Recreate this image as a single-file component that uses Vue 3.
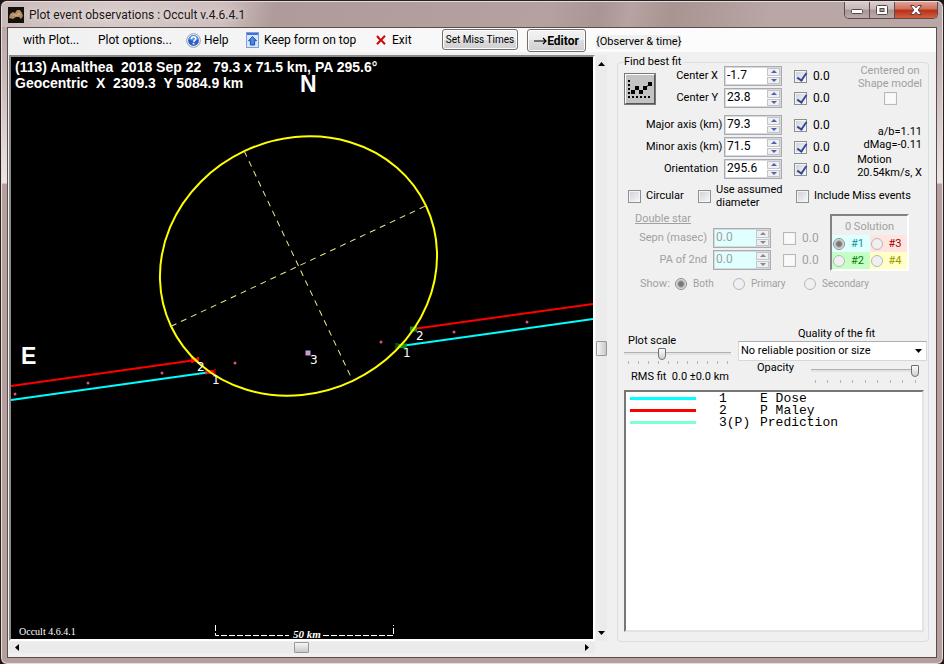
<script setup>
import { reactive, ref } from 'vue'

const ellipseRows = reactive([
  { id: 'cx', label: 'Center X', value: '-1.7', on: true },
  { id: 'cy', label: 'Center Y', value: '23.8', on: true },
  { id: 'major', label: 'Major axis (km)', value: '79.3', on: true, spaced: true },
  { id: 'minor', label: 'Minor axis (km)', value: '71.5', on: true },
  { id: 'orient', label: 'Orientation', value: '295.6', on: true }
])
const doubleRows = reactive([
  { id: 'sepn', label: 'Sepn (masec)', value: '0.0' },
  { id: 'pa', label: 'PA of 2nd', value: '0.0' }
])
const solutions = [
  { id: 1, tone: 'cyan' },
  { id: 3, tone: 'pink' },
  { id: 2, tone: 'green' },
  { id: 4, tone: 'yellow' }
]
const shows = ['Both', 'Primary', 'Secondary']
const quality = ref('No reliable position or size')
const scale = ref(34)
const opacity = ref(100)
const observers = [
  { color: '#00ffff', num: '1', name: 'E Dose' },
  { color: '#ff0000', num: '2', name: 'P Maley' },
  { color: '#7fffd4', num: '3(P)', name: 'Prediction' }
]
const dots = [[15, 394], [88, 383], [162, 373], [235, 363], [381, 342], [454, 332], [527, 322]]

function step(row, delta) {
  row.value = (parseFloat(row.value) + delta).toFixed(1)
}
</script>

<template>
  <div class="window">
    <header class="titlebar">
      <svg class="app-icon" viewBox="0 0 16 16" aria-hidden="true">
        <rect width="16" height="16" fill="#17110d" />
        <path d="M1 11 L2 7 L5 5 L7 6 L9 3 L12 3 L14 6 L15 9 L13 12 L11 10 L8 10 L5 12 Z" fill="#b08a62" />
        <path d="M3 8 L6 7 L8 8 L11 5 L13 8 L8 9 Z" fill="#c8a880" />
      </svg>
      <h1>Plot event observations : Occult v.4.6.4.1</h1>
      <div class="caption">
        <button type="button" class="cap min" aria-label="Minimize">
          <svg viewBox="0 0 14 12"><rect x="1.5" y="5.5" width="11" height="4" rx="1" fill="#fff" stroke="#54474c" /></svg>
        </button>
        <button type="button" class="cap max" aria-label="Maximize">
          <svg viewBox="0 0 14 12"><rect x="1.5" y="1.5" width="11" height="9" rx="1" fill="#fff" stroke="#54474c" /><rect x="5" y="4.500" width="4" height="3" fill="#b5a3a3" stroke="#54474c" /></svg>
        </button>
        <button type="button" class="cap close" aria-label="Close">
          <svg viewBox="0 0 14 12"><path d="M1.500 1.500h3.500l2 2.300 2-2.300h3.500L9.200 6l3.300 4.500H9L7 8.200 5 10.500H1.500L4.800 6z" fill="#fff" stroke="#5a3d42" /></svg>
        </button>
      </div>
    </header>

    <div class="client">
      <nav class="toolbar">
        <div class="menu">
          <button type="button">with Plot...</button>
          <button type="button">Plot options...</button>
          <button type="button">
            <svg class="ic-help" viewBox="0 0 16 16" aria-hidden="true">
              <circle cx="8" cy="8" r="7.300" fill="#f4f6fa" stroke="#8d98ac" />
              <circle cx="8" cy="8" r="5.800" fill="#2c5fc9" />
              <path d="M3 7a5 4.500 0 0 1 10 0q-5 2-10 0z" fill="#5f8fe6" />
              <path d="M5.800 6.300q0-2.300 2.300-2.300t2.300 2q0 1-1.100 1.800T8.100 9.500" fill="none" stroke="#fff" stroke-width="1.600" />
              <rect x="7.200" y="10.500" width="1.800" height="1.700" fill="#fff" />
            </svg>Help
          </button>
          <button type="button">
            <svg class="ic-page" viewBox="0 0 13 16" aria-hidden="true">
              <rect x="0.500" y="0.500" width="12" height="15" fill="#d8e7fb" stroke="#7f9fd8" />
              <rect x="1" y="1" width="11" height="2" fill="#3f74d8" />
              <path d="M6.500 4.500l4 4.200H8.600V13H4.400V8.700H2.500z" fill="#4d86e2" stroke="#1d4fae" />
            </svg>Keep form on top
          </button>
          <button type="button">
            <svg class="ic-exit" viewBox="0 0 10 10" aria-hidden="true">
              <path d="M1 1l3 3.500M9 0.800L1 9.200M5 5l4 4.200" fill="none" stroke="#cc0a0a" stroke-width="2" />
            </svg>Exit
          </button>
        </div>
        <button type="button" class="btn miss">Set Miss Times</button>
        <button type="button" class="btn editor">
          <svg viewBox="0 0 13 8" aria-hidden="true"><path d="M0 4h12M9 1l3 3-3 3" fill="none" stroke="#000" stroke-width="1.200" /></svg>Editor
        </button>
        <span class="obs">{Observer &amp; time}</span>
      </nav>

      <main class="main">
        <div class="plot-area">
          <div class="plot">
            <svg viewBox="11 57 582 582" preserveAspectRatio="xMidYMid meet">
              <g class="head">
                <text x="15" y="72">(113) Amalthea&nbsp; 2018 Sep 22&nbsp;&nbsp; 79.3 x 71.5 km, PA 295.6°</text>
                <text x="15" y="88">Geocentric&nbsp; X&nbsp; 2309.3&nbsp; Y 5084.9 km</text>
              </g>
              <text class="compass" x="300" y="92">N</text>
              <text class="compass" x="21" y="364">E</text>

              <g stroke-width="2" fill="none">
                <path d="M11 386L196 360M413 329L593 304" stroke="#ff0000" />
                <path d="M11 400L211 372M401 346L593 319" stroke="#00ffff" />
              </g>
              <g fill="none" stroke="#ff0000">
                <path d="M192 357v6M198 357v6" stroke-width="2" />
                <path d="M193 360h6" stroke-width="4" />
                <path d="M206 369v6M215 369v6" stroke-width="1" />
                <path d="M207 372h7" stroke-width="4" />
              </g>
              <g fill="none" stroke="#159015">
                <path d="M410 329h7" stroke-width="5" />
                <path d="M396 343v6M398 343v6M404 343v6M406 343v6" />
                <path d="M398 346h8" stroke-width="4" />
              </g>
              <g transform="translate(298.500 266) rotate(-25.300)" fill="none">
                <ellipse rx="141" ry="127" stroke="#ffff00" stroke-width="2" />
                <path d="M-141 0H141M0 -127V127" stroke="#f0e68c" stroke-dasharray="6 5" />
              </g>
              <circle v-for="d in dots" :key="d[0]" :cx="d[0]" :cy="d[1]" r="1.500" fill="#d8508c" />
              <rect x="306" y="351" width="4" height="4" fill="#e58ad0" stroke="#b8a8d8" stroke-width="1" />
              <g class="chord">
                <text x="197" y="371">2</text>
                <text x="212" y="384">1</text>
                <text x="310" y="364">3</text>
                <text x="416" y="340">2</text>
                <text x="403" y="357">1</text>
              </g>
              <text class="version" x="19" y="635">Occult 4.6.4.1</text>
              <path d="M215.500 625V635.500H289M323 635.500H393.500V625" fill="none" stroke="#fff" stroke-dasharray="6 2" />
              <text class="km" x="293" y="638">50 km</text>
            </svg>
          </div>
          <div class="scroll vertical" role="group" aria-label="Vertical position">
            <button type="button" aria-label="Up"><svg viewBox="0 0 7 4"><path d="M0 4L3.500 0 7 4z" /></svg></button>
            <span class="thumb"></span>
            <button type="button" aria-label="Down"><svg viewBox="0 0 7 4"><path d="M0 0h7L3.500 4z" /></svg></button>
          </div>
          <div class="scroll horizontal" role="group" aria-label="Horizontal position">
            <button type="button" aria-label="Left"><svg viewBox="0 0 4 7"><path d="M4 0v7L0 3.500z" /></svg></button>
            <span class="thumb"></span>
            <button type="button" aria-label="Right"><svg viewBox="0 0 4 7"><path d="M0 0v7l4-3.500z" /></svg></button>
          </div>
        </div>

        <fieldset class="panel">
          <legend>Find best fit</legend>

          <div class="fit">
            <button type="button" class="fit-btn" aria-label="Find best fit">
              <svg viewBox="0 0 28 28" aria-hidden="true">
                <path d="M3 5v18M6 22h19" fill="none" stroke="#000" stroke-width="2" stroke-dasharray="2 2" />
                <path d="M7 17L11 13 15 17 19 13 24 9" fill="none" stroke="#000" />
                <path d="M5 15h4v4H5zM9 11h4v4H9zM13 15h4v4h-4zM17 11h4v4h-4zM22 7h4v4h-4z" />
              </svg>
            </button>
            <div class="rows">
              <div v-for="r in ellipseRows" :key="r.id" class="row" :class="{ spaced: r.spaced }">
                <label class="name" :for="r.id">{{ r.label }}</label>
                <div class="spin">
                  <input :id="r.id" v-model="r.value" type="text" />
                  <div class="arrows">
                    <button type="button" aria-label="Increase" @click="step(r, 0.1)"><svg viewBox="0 0 6 3"><path d="M0 3L3 0l3 3z" /></svg></button>
                    <button type="button" aria-label="Decrease" @click="step(r, -0.1)"><svg viewBox="0 0 6 3"><path d="M0 0h6L3 3z" /></svg></button>
                  </div>
                </div>
                <label class="tick"><input v-model="r.on" type="checkbox" />0.0</label>
              </div>
            </div>
            <div class="side">
              <label class="centered">Centered on<br />Shape model<input type="checkbox" disabled /></label>
              <p class="ratio">a/b=1.11<br />dMag=-0.11</p>
              <p class="motion">Motion<br />20.54km/s, X</p>
            </div>
          </div>

          <div class="options">
            <label><input type="checkbox" />Circular</label>
            <label class="assumed"><input type="checkbox" /><span>Use assumed<br />diameter</span></label>
            <label><input type="checkbox" />Include Miss events</label>
          </div>

          <div class="double">
            <div class="double-left">
              <h2>Double star</h2>
              <div v-for="r in doubleRows" :key="r.id" class="row off">
                <label class="name" :for="r.id">{{ r.label }}</label>
                <div class="spin">
                  <input :id="r.id" v-model="r.value" type="text" disabled />
                  <div class="arrows">
                    <button type="button" disabled aria-label="Increase"><svg viewBox="0 0 6 3"><path d="M0 3L3 0l3 3z" /></svg></button>
                    <button type="button" disabled aria-label="Decrease"><svg viewBox="0 0 6 3"><path d="M0 0h6L3 3z" /></svg></button>
                  </div>
                </div>
                <label class="tick"><input type="checkbox" disabled />0.0</label>
              </div>
            </div>
            <div class="solution">
              <p>0 Solution</p>
              <label v-for="s in solutions" :key="s.id" :class="s.tone">
                <input type="radio" name="solution" disabled :checked="s.id === 1" />#{{ s.id }}
              </label>
            </div>
          </div>

          <div class="show">
            <span>Show:</span>
            <label v-for="(s, i) in shows" :key="s"><input type="radio" name="show" disabled :checked="i === 0" />{{ s }}</label>
          </div>

          <div class="controls">
            <div class="scale">
              <label for="scale">Plot scale</label>
              <input id="scale" v-model="scale" type="range" />
              <div class="ticks"><i v-for="n in 11" :key="n"></i></div>
              <p>RMS fit&nbsp; 0.0 ±0.0 km</p>
            </div>
            <div class="quality">
              <label for="quality">Quality of the fit</label>
              <div class="select">
                <select id="quality" v-model="quality">
                  <option>No reliable position or size</option>
                </select>
                <svg viewBox="0 0 7 4" aria-hidden="true"><path d="M0 0h7L3.500 4z" /></svg>
              </div>
              <div class="opacity">
                <label for="opacity">Opacity</label>
                <div class="slide">
                  <input id="opacity" v-model="opacity" type="range" />
                  <div class="ticks"><i v-for="n in 9" :key="n"></i></div>
                </div>
              </div>
            </div>
          </div>

          <ul class="list">
            <li v-for="o in observers" :key="o.num">
              <span class="swatch" :style="{ background: o.color }"></span>
              <span>{{ o.num }}</span>
              <span>{{ o.name }}</span>
            </li>
          </ul>
        </fieldset>
      </main>
    </div>
  </div>
</template>

<style>
body {
  background: #1a1517;
}
</style>

<style scoped>
* {
  box-sizing: border-box;
}
h1, h2, p, ul {
  margin: 0;
  padding: 0;
  font-weight: normal;
}
button, input, select {
  font: inherit;
  color: inherit;
  margin: 0;
  padding: 0;
}
button {
  border: 0;
  background: none;
}
.window {
  display: flex;
  flex-direction: column;
  min-height: 100vh;
  padding: 0 6px 6px;
  border: 1px solid #2a2023;
  border-radius: 7px;
  box-shadow: inset 0 0 0 1px #e6dcda;
  background: linear-gradient(#b5a3a1 0, #c4b3b0 60px, #eee6e4 182px, #b49f9c 183px, #b49f9c 100%);
  font: 11px/14px Roboto, "Liberation Sans", Arial, sans-serif;
  color: #000;
}
.titlebar {
  display: flex;
  align-items: center;
  height: 26px;
  margin: 0 -5px;
  padding: 0 0 0 6px;
  border-top: 1px solid #e6dcda;
  border-radius: 6px 6px 0 0;
  background: linear-gradient(100deg, #c9bbb9 0, #d6cac8 110px, #cdbfbd 220px, #af9b99 270px, #b5a2a0 540px, #a99593 590px, #b7a4a2 620px, #a89491 660px, #b9a7a5 760px, #b9a7a5 100%);
}
.app-icon {
  width: 16px;
  height: 16px;
  margin-right: 5px;
}
h1 {
  flex: 1;
  font: 12px/16px Roboto, "Noto Sans", sans-serif;
  color: #1a1414;
  text-shadow: 0 0 6px #fff;
}
.caption {
  display: flex;
  align-self: flex-start;
  height: 17px;
  margin-right: 4px;
  border: 1px solid #5c4c4e;
  border-top: 0;
  border-radius: 0 0 5px 5px;
  overflow: hidden;
}
.cap {
  display: grid;
  place-items: center;
  width: 25px;
  border-right: 1px solid #5c4c4e;
  background: linear-gradient(#d9cdcd 0, #c7b8b8 45%, #a89596 50%, #bba9a9 100%);
}
.cap svg {
  width: 14px;
  height: 12px;
}
.cap.close {
  width: 42px;
  border-right: 0;
  background: linear-gradient(#e0a294 0, #cf6d59 45%, #b62f17 50%, #d2603f 100%);
}
.client {
  display: flex;
  flex-direction: column;
  flex: 1;
  border: 1px solid #5b4d4d;
  background: #f0f0f0;
}
.toolbar {
  display: flex;
  align-items: flex-start;
  height: 24px;
  padding-left: 15px;
  background: linear-gradient(90deg, #f0f0f0, #fcfcfc 70%);
}
.menu {
  display: grid;
  grid-template-columns: 75px 88px 60px 130px 66px;
  font: 12px/24px Roboto, "Noto Sans", sans-serif;
}
.menu button {
  display: flex;
  align-items: center;
  height: 24px;
  white-space: nowrap;
}
.ic-help {
  width: 15px;
  height: 15px;
  margin-right: 3px;
}
.ic-page {
  width: 13px;
  height: 16px;
  margin-right: 5px;
}
.ic-exit {
  width: 10px;
  height: 10px;
  margin-right: 6px;
}
.btn {
  border: 1px solid #707070;
  border-radius: 3px;
  background: linear-gradient(#f2f2f2 0, #ebebeb 50%, #dddddd 50%, #cfcfcf 100%);
  box-shadow: inset 0 0 0 1px #fcfcfc;
}
.miss {
  width: 76px;
  height: 21px;
  margin: 1px 9px 0 0;
  font-size: 10px;
  white-space: nowrap;
}
.editor {
  display: flex;
  align-items: center;
  justify-content: center;
  width: 59px;
  height: 23px;
  margin: 1px 10px 0 0;
  font-size: 12px;
  font-weight: bold;
}
.editor svg {
  width: 13px;
  height: 8px;
}
.obs {
  margin-top: 7px;
  background: #f0f0f0;
}
.main {
  display: grid;
  grid-template-columns: minmax(0, 598fr) minmax(0, 312fr);
  gap: 10px;
  flex: 1;
  padding: 3px 7px 4px 1px;
}
.plot-area {
  display: grid;
  grid-template-columns: minmax(0, 1fr) 11px;
  grid-template-rows: minmax(0, 1fr) 11px;
  gap: 1px;
}
.plot {
  display: flex;
  border: 2px solid;
  border-color: #8a8a8a #fff #fff #8a8a8a;
  background: #000;
}
.plot svg {
  width: 100%;
  height: 100%;
}
.plot text {
  fill: #fff;
}
.head {
  font: bold 14px "Liberation Sans", Arial, sans-serif;
}
.compass {
  font: bold 23px "Liberation Sans", Arial, sans-serif;
}
.chord {
  font: 12px "DejaVu Sans", sans-serif;
}
.version {
  font: 10px "Liberation Serif", serif;
}
.km {
  font: italic bold 11px "Liberation Serif", serif;
}
.scroll {
  display: flex;
  align-items: center;
  justify-content: space-between;
  background: #ebebeb;
}
.scroll button {
  display: grid;
  place-items: center;
  width: 11px;
  height: 11px;
}
.scroll .thumb {
  border: 1px solid #989898;
  border-radius: 1px;
}
.vertical {
  flex-direction: column;
  padding: 3px 0;
}
.vertical svg {
  width: 7px;
  height: 4px;
}
.vertical .thumb {
  width: 11px;
  height: 15px;
  background: linear-gradient(90deg, #f5f5f5, #e0e0e0 50%, #c8c8c8);
}
.horizontal {
  padding: 0 3px 0 2px;
}
.horizontal svg {
  width: 4px;
  height: 7px;
}
.horizontal .thumb {
  width: 15px;
  height: 11px;
  background: linear-gradient(#f5f5f5, #e0e0e0 50%, #c8c8c8);
}
.panel {
  display: flex;
  flex-direction: column;
  min-width: 0;
  margin: 3px 0 11px;
  padding: 0 1px 9px 6px;
  border: 1px solid #d5dfe5;
  border-radius: 4px;
}
legend {
  height: 8px;
  padding: 0 2px 0 0;
  line-height: 8px;
}
.fit {
  display: flex;
}
.fit-btn {
  width: 32px;
  height: 32px;
  margin-top: 7px;
  border: 2px solid;
  border-color: #fff #555 #555 #fff;
  outline: 1px solid #777;
  outline-offset: -1px;
  background: #c3c3c3;
}
.fit-btn svg {
  display: block;
  width: 28px;
  height: 28px;
}
.rows {
  display: flex;
  flex-direction: column;
  gap: 2px;
  margin-left: -10px;
}
.row {
  display: grid;
  grid-template-columns: 78px 58px 60px;
  align-items: center;
  height: 20px;
}
.row.spaced {
  margin-top: 5px;
}
.name {
  padding-right: 6px;
  text-align: right;
  white-space: nowrap;
}
.spin {
  display: flex;
  height: 20px;
  border: 1px solid #a8abb2;
  outline: 1px solid #d8d9dc;
  outline-offset: -2px;
  background: #fff;
}
.spin input {
  flex: 1;
  width: 0;
  min-width: 0;
  padding: 0 0 2px 2px;
  border: 0;
  background: none;
  font-size: 12px;
  line-height: 14px;
}
.arrows {
  display: grid;
  gap: 1px;
  width: 13px;
  margin: 1px;
}
.arrows button {
  display: grid;
  place-items: center;
  border: 1px solid #c4c4c8;
  background: #efefef;
}
.arrows svg {
  width: 6px;
  height: 3px;
  fill: #4a62b4;
}
.tick {
  display: flex;
  align-items: center;
  gap: 6px;
  padding-left: 12px;
  font-size: 12px;
}
input[type="checkbox"] {
  appearance: none;
  flex: none;
  width: 13px;
  height: 13px;
  border: 1px solid #8e8f8f;
  background: linear-gradient(135deg, #cfd3da, #f6f6f6) content-box;
  padding: 1px;
  box-shadow: inset 0 0 0 1px #f4f4f4;
}
input[type="checkbox"]:checked::after {
  content: "";
  display: block;
  width: 4px;
  height: 8px;
  margin: -1px 0 0 3px;
  border: solid #33489a;
  border-width: 0 2px 2px 0;
  transform: rotate(35deg);
}
input[type="checkbox"]:disabled {
  border-color: #b8b8b8;
  background: #fafafa;
}
.side {
  display: flex;
  flex-direction: column;
  flex: 1;
  min-width: 0;
  margin-top: -2px;
  padding-right: 5px;
  white-space: nowrap;
}
.centered {
  display: flex;
  flex-direction: column;
  align-items: center;
  align-self: flex-end;
  line-height: 13px;
  color: #a0a0a0;
  text-align: center;
}
.centered input {
  margin-top: 2px;
}
.ratio {
  margin-top: 20px;
  line-height: 13px;
  text-align: right;
}
.motion {
  align-self: flex-end;
  margin-top: 2px;
  line-height: 13px;
}
.options {
  display: grid;
  grid-template-columns: 70px 98px 1fr;
  align-items: center;
  height: 26px;
  margin-top: 4px;
  padding-left: 4px;
}
.options label {
  display: flex;
  align-items: center;
  gap: 5px;
  white-space: nowrap;
}
.assumed span {
  line-height: 13px;
}
.double {
  display: flex;
  color: #a0a0a0;
}
h2 {
  margin: 3px 0 2px 11px;
  font-size: 11px;
  line-height: 14px;
  text-decoration: underline;
}
.off {
  grid-template-columns: 89px 58px 59px;
  margin-bottom: 2px;
}
.off .spin {
  background: #e0ffff;
}
.off .arrows svg {
  fill: #888;
}
.solution {
  display: grid;
  grid-template-columns: 1fr 1fr;
  grid-template-rows: 19px 17px 17px;
  width: 79px;
  height: 57px;
  margin-top: 5px;
  border: 2px solid;
  border-color: #828282 #fff #fff #828282;
}
.solution p {
  grid-column: 1 / -1;
  padding-top: 4px;
  text-align: center;
}
.solution label {
  display: flex;
  align-items: center;
  gap: 6px;
  padding-left: 1px;
}
.cyan { background: #e0ffff; color: #009a9a; }
.pink { background: #ffe4e1; color: #a00000; }
.green { background: #c6ffc6; color: #008000; }
.yellow { background: #ffffc6; color: #9a9a00; }
input[type="radio"] {
  appearance: none;
  flex: none;
  width: 12px;
  height: 12px;
  border: 1px solid #b8b8b8;
  border-radius: 50%;
  background: #f0f0f0;
}
input[type="radio"]:checked {
  border-color: #8a8a8a;
  background: radial-gradient(circle, #777 0, #777 2px, #c8c8c8 4px, #f2f2f2 5px);
}
.show {
  display: grid;
  grid-template-columns: 35px 58px 71px 1fr;
  align-items: center;
  height: 14px;
  margin-top: 5px;
  padding-left: 16px;
  color: #a0a0a0;
}
.show label {
  display: flex;
  align-items: center;
  gap: 6px;
  font-size: 10px;
}
.controls {
  display: grid;
  grid-template-columns: 107px minmax(0, 1fr);
  gap: 7px;
  margin-top: 36px;
}
.scale {
  display: flex;
  flex-direction: column;
  padding-top: 7px;
}
.scale label {
  padding-left: 4px;
}
.scale p {
  padding: 6px 0 0 7px;
  white-space: nowrap;
}
input[type="range"] {
  appearance: none;
  display: block;
  width: 100%;
  height: 12px;
  background: linear-gradient(#b0b0b0, #b0b0b0) 0 4px / 100% 1px no-repeat, linear-gradient(#e2e2e2, #e2e2e2) 0 5px / 100% 2px no-repeat;
}
input[type="range"]::-webkit-slider-thumb {
  appearance: none;
  width: 8px;
  height: 12px;
  border: 1px solid #707070;
  border-radius: 1px 1px 4px 4px;
  background: linear-gradient(#fafafa, #d0d0d0);
}
.ticks {
  display: flex;
  justify-content: space-between;
  padding: 3px 3px 0 4px;
}
.scale .ticks {
  padding-top: 1px;
}
.ticks i {
  width: 1px;
  height: 3px;
  background: #b4b4b4;
}
.quality {
  display: flex;
  flex-direction: column;
}
.quality > label {
  padding-left: 8px;
  text-align: center;
}
.select {
  display: grid;
  grid-template-columns: minmax(0, 1fr) 7px;
  align-items: center;
  height: 20px;
  padding-right: 4px;
  border: 1px solid #d5d8de;
  border-top-color: #abadb3;
  background: #fff;
}
.select select {
  appearance: none;
  grid-area: 1 / 1 / 2 / 3;
  height: 18px;
  padding-left: 2px;
  border: 0;
  background: none;
}
.select svg {
  grid-area: 1 / 2;
  width: 7px;
  height: 4px;
  pointer-events: none;
}
.opacity {
  display: flex;
  gap: 17px;
  padding: 0 8px 0 19px;
}
.slide {
  flex: 1;
  padding-top: 4px;
}
.list {
  flex: 1;
  margin: 6px 3px 0 0;
  padding: 1px 0 0 4px;
  border: 2px solid;
  border-color: #777 #e3e3e3 #e3e3e3 #777;
  background: #fff;
  font: 13px/12px "Liberation Mono", monospace;
  list-style: none;
}
.list li {
  display: grid;
  grid-template-columns: 89px 41px 1fr;
  height: 12px;
}
.swatch {
  width: 66px;
  height: 3px;
  margin-top: 4px;
}
</style>
